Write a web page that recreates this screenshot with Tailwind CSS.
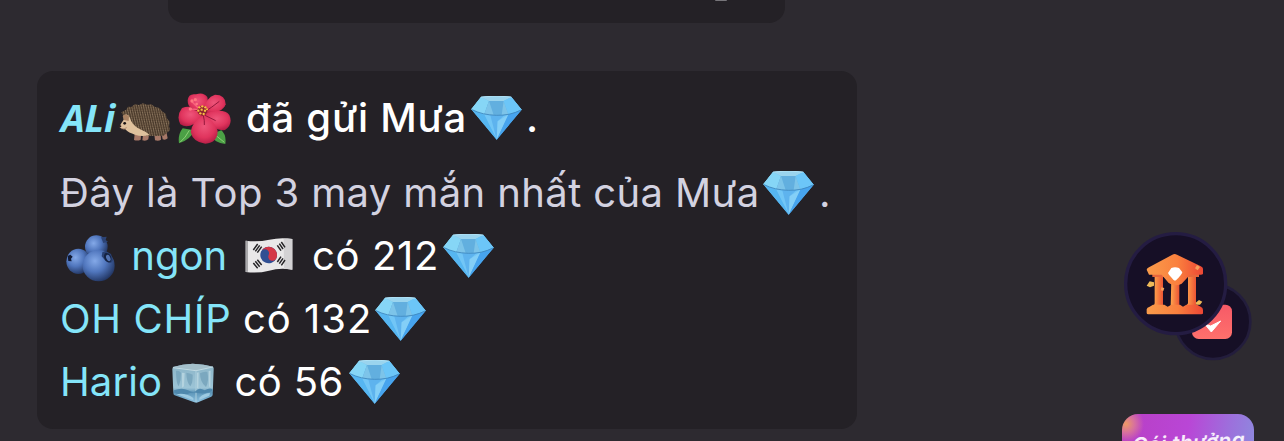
<!DOCTYPE html>
<html lang="vi">
<head>
<meta charset="utf-8">
<title>Mưa kim cương</title>
<script src="https://cdn.jsdelivr.net/npm/@tailwindcss/browser@4"></script>
</head>
<body class="bg-[#2d2a30]">
<svg class="absolute w-0 h-0" aria-hidden="true">
  <defs>
    <linearGradient id="dg" x1="0" y1="0" x2="1" y2="1"><stop offset="0" stop-color="#7fd3f8"/><stop offset=".5" stop-color="#5dbcf4"/><stop offset="1" stop-color="#2f93e6"/></linearGradient>
    <linearGradient id="dt" x1="0" y1="0" x2="1" y2="0"><stop offset="0" stop-color="#8fe0fa"/><stop offset=".4" stop-color="#62b2e2"/><stop offset="1" stop-color="#6ccaf8"/></linearGradient>
    <symbol id="diamond" viewBox="0 0 153 132">
      <path d="M30 3Q76-3 121 3L152 41L77 131L1 40Z" fill="url(#dg)"/>
      <path d="M30 3Q76-3 121 3L152 41Q120 57 76 58Q30 57 1 40Z" fill="url(#dt)"/>
      <path d="M30 3L54 15L40 55L1 40Z" fill="#86d6f6"/>
      <path d="M54 15L98 15L112 55Q76 60 40 55Z" fill="#62afdf"/>
      <path d="M54 15L68 57L40 55ZM98 15L112 55L92 57Z" fill="#7dc4e9"/>
      <path d="M30 3Q76-3 121 3L98 15L54 15Z" fill="#9ad4ee"/>
      <path d="M121 3L152 41L112 55L98 15Z" fill="#6cc6f8"/>
      <path d="M40 56Q76 61 112 56L77 131Z" fill="#72c6f6"/>
      <path d="M58 58L77 131L80 76L100 58Z" fill="#5eb3ee"/>
      <path d="M80 76L112 56L77 131Z" fill="#84cff7"/>
      <path d="M112 56L152 41L77 131Z" fill="#47a4ee"/>
      <path d="M1 40L40 56L77 131Z" fill="#56b6f1"/>
      <path d="M3 41Q35 57 76 58T150 42" fill="none" stroke="#3f86bc" stroke-width="2.5"/>
      <path d="M30 3Q76-3 121 3" fill="none" stroke="#b8e6f6" stroke-width="2.5"/>
    </symbol>
  </defs>
</svg>
<main class="flex h-[441px] w-[1284px] overflow-hidden bg-[#2d2a30]" style="font-family:Inter,'Noto Sans',sans-serif">
  <section class="w-[1110px] shrink-0">
    <div class="ml-[168px] flex h-[23px] w-[617px] justify-end rounded-b-2xl bg-[#242126] pr-[58px]"><span class="h-px w-3 rounded-b-full bg-[#77757a]"></span></div>
    <article class="mt-12 ml-[37px] flex h-[358px] w-[820px] flex-col rounded-[16px] bg-[#242126] pt-[15px] pl-[23px] text-[40px] leading-[63px] whitespace-pre text-white">
      <div class="mb-3 flex h-[63px] shrink-0 font-medium">
        <span class="w-[59px] shrink-0 pl-px text-[38px] font-bold tracking-[-0.3px] italic text-[#84e5f9]" style="font-family:'Open Sans','Noto Sans',sans-serif">ALi</span>
        <svg class="mt-[17px] h-[39px] w-[52px] shrink-0" viewBox="0 0 156 117">
          <defs><pattern id="sp" width="11" height="9" patternUnits="userSpaceOnUse" patternTransform="rotate(38)"><path d="M0 1L4 3M6 5L10 8" stroke="#b59d80" stroke-width="1.8"/><path d="M6 0L10 3M1 5L4 8" stroke="#2a1e17" stroke-width="2.2"/></pattern></defs>
          <path d="M47 93L45 111Q55 115 65 110L66 95ZM72 96L70 112Q82 115 88 109L90 95ZM106 94L108 112Q119 115 126 110L125 92ZM127 88L131 109Q140 112 146 106L142 86Z" fill="#a87968"/>
          <path d="M7 28L22 20L27 11L37 12L47 4L60 6L72 1L84 5L97 4L108 12L121 15L129 25L140 32L143 45L152 57L150 70L153 82L143 90L134 98L110 99L80 98L49 93L28 66Z" fill="#5d4a38"/>
          <path d="M7 28L22 20L27 11L37 12L47 4L60 6L72 1L84 5L97 4L108 12L121 15L129 25L140 32L143 45L152 57L150 70L153 82L143 90L134 98L110 99L80 98L49 93L28 66Z" fill="url(#sp)"/>
          <path d="M14 37Q26 30 33 45Q38 66 62 78Q80 85 92 96Q68 103 48 95Q29 90 19 79Q5 78 1 71Q8 58 14 50Z" fill="#dfc19d"/>
          <path d="M11 39Q20 29 30 40L29 54L15 51Z" fill="#aa8263"/><circle cx="17" cy="61" r="4.2" fill="#191315"/><ellipse cx="3.5" cy="70" rx="3.5" ry="3" fill="#2b1a1a"/><path d="M6 77Q17 79 23 74" fill="none" stroke="#98705a" stroke-width="2"/>
        </svg>
        <svg class="mt-[7px] ml-[7px] h-[51px] w-[53px] shrink-0" viewBox="0 0 159 153">
          <defs><radialGradient id="pt" cx=".5" cy=".4" r=".65"><stop offset="0" stop-color="#ee557a"/><stop offset=".6" stop-color="#e0345d"/><stop offset="1" stop-color="#b01b43"/></radialGradient></defs>
          <path d="M3 151Q-1 125 14 106L48 112Q39 140 3 151ZM142 153Q108 151 98 124L130 112Q146 126 142 153Z" fill="#4ba045"/><path d="M7 147Q22 135 34 112M139 148L112 126" stroke="#8fd077" stroke-width="3" fill="none"/>
          <path d="M69 55Q29 54 29 22Q31 0 54 4Q76-4 88 12Q92 31 84 58Z" fill="url(#pt)"/>
          <path d="M72 58Q84 12 111 5Q143 5 143 34Q135 59 80 66Z" fill="url(#pt)"/>
          <path d="M74 64Q136 42 154 66Q166 95 141 111Q103 116 76 76Z" fill="url(#pt)"/>
          <path d="M74 61Q42 32 12 45Q-6 69 7 94Q34 113 74 72Z" fill="url(#pt)"/>
          <path d="M74 68Q40 88 38 117Q45 148 82 152Q119 149 119 113Q108 83 80 66Z" fill="url(#pt)"/>
          <path d="M72 58Q50 52 35 43M75 60Q103 42 124 25M76 68Q80 82 79 96M81 67L113 83" stroke="#95173b" stroke-width="3" fill="none"/>
          <path d="M75 60L43 27M66 50L38 48" stroke="#f9637c" stroke-width="4"/><g fill="#ff7781"><circle cx="42" cy="24" r="5"/><circle cx="52" cy="20" r="5"/><circle cx="37" cy="48" r="5"/><circle cx="56" cy="33" r="4"/></g>
          <circle cx="73" cy="53" r="15" fill="#8f2330"/><g fill="#f7bf45"><circle cx="64" cy="43" r="3.5"/><circle cx="73" cy="40" r="3.5"/><circle cx="82" cy="43" r="3.5"/><circle cx="61" cy="53" r="3.5"/><circle cx="71" cy="50" r="3.5"/><circle cx="81" cy="53" r="3.5"/><circle cx="67" cy="61" r="3.5"/><circle cx="77" cy="63" r="3.5"/><circle cx="87" cy="49" r="3"/></g>
        </svg>
        <span class="ml-[15px] w-[225px] shrink-0 tracking-[0.75px]">đã gửi Mưa</span>
        <svg class="mt-[10px] h-11 w-[51px] shrink-0"><use href="#diamond"/></svg>
        <span class="ml-[4px]">.</span>
      </div>
      <div class="flex h-[63px] shrink-0 text-[#d3d2e0]">
        <span class="w-[703px] shrink-0 tracking-[0.38px]">Đây là Top 3 may mắn nhất của Mưa</span>
        <svg class="mt-[10px] h-11 w-[51px] shrink-0"><use href="#diamond"/></svg>
        <span class="ml-[5px]">.</span>
      </div>
      <div class="flex h-[63px] shrink-0">
        <svg class="mt-[11px] ml-[6px] h-[47px] w-[49px] shrink-0" viewBox="0 0 147 141">
          <defs><radialGradient id="bb" cx=".38" cy=".35" r=".7"><stop offset="0" stop-color="#84a9e8"/><stop offset=".5" stop-color="#5076bd"/><stop offset="1" stop-color="#20335f"/></radialGradient></defs>
          <circle cx="91" cy="35" r="34" fill="url(#bb)"/><path d="M105 7L122 5L119 15L126 20L112 24Z" fill="#2c4375"/>
          <ellipse cx="37" cy="79" rx="36" ry="38" fill="url(#bb)"/><path d="M5 63L13 59L20 65L15 71L17 79L7 78Z" fill="#111a34"/>
          <ellipse cx="98" cy="92" rx="48" ry="47" fill="url(#bb)"/><path d="M109 52L119 48L135 57L141 76L135 84L119 78L107 64Z" fill="#294173"/><ellipse cx="125" cy="68" rx="10" ry="15" transform="rotate(-24 125 68)" fill="#152342"/><ellipse cx="127" cy="69" rx="6" ry="10" transform="rotate(-24 127 69)" fill="#5373b0"/>
        </svg>
        <span class="ml-[5px] w-[125px] shrink-0 text-[#84e5f9]"> ngon</span>
        <svg class="mt-[14px] h-[35px] w-[48px] shrink-0" viewBox="0 0 144 105">
          <path d="M2 8Q38 13 73 5T142 3V95Q105 89 72 98T2 102Z" fill="#e9e8e9"/><path d="M2 8L9 9V101L2 102Z" fill="#aaa9ab"/><path d="M116 2Q131 0 142 3V95Q130 92 117 93Z" fill="#d3d2d4"/>
          <g transform="rotate(24 71 51)"><circle cx="71" cy="51" r="25" fill="#304f93"/><path d="M46 51A25 25 0 0 1 96 51A12.5 12.5 0 0 1 71 51A12.5 12.5 0 0 0 46 51Z" fill="#d43848"/></g>
          <g stroke="#242326" stroke-width="4.5"><path d="M25 36L38 18M31 40L44 22M37 44L50 26M97 22L108 38M103 17L114 33M109 12L120 28M25 75L38 91M31 70L44 86M37 65L50 81M97 72L108 56M103 77L114 61M109 82L120 66"/></g>
        </svg>
        <span class="ml-[7px] w-[143px] shrink-0 tracking-[0.65px]"> có 212</span>
        <svg class="mt-[10px] h-11 w-[51px] shrink-0"><use href="#diamond"/></svg>
      </div>
      <div class="flex h-[63px] shrink-0">
        <span class="w-[183px] shrink-0 tracking-[0.65px] text-[#84e5f9]">OH CHÍP</span>
        <span class="w-[132px] shrink-0 tracking-[1px]">có 132</span>
        <svg class="mt-[10px] h-11 w-[51px] shrink-0"><use href="#diamond"/></svg>
      </div>
      <div class="flex h-[63px] shrink-0">
        <span class="w-[112px] shrink-0 tracking-[0.1px] text-[#84e5f9]">Hario</span>
        <svg class="mt-[13px] h-10 w-[42px] shrink-0" viewBox="0 0 126 120">
          <defs><linearGradient id="ice" x1="0" y1="0" x2="0" y2="1"><stop offset="0" stop-color="#8cb5c8"/><stop offset=".62" stop-color="#9cc4d6"/><stop offset=".74" stop-color="#5d96b9"/><stop offset="1" stop-color="#8ec2e0"/></linearGradient></defs>
          <path d="M3 12Q32 3 62 2Q97 4 123 11Q126 14 125 20L122 96Q121 100 116 102L78 118Q73 120 67 118L8 97Q4 95 4 90L1 18Z" fill="url(#ice)"/>
          <path d="M3 12Q32 3 62 2Q97 4 123 11L73 22Z" fill="#a4bfca"/><path d="M3 14L72 23L123 12" fill="none" stroke="#c3dbe3" stroke-width="3"/><path d="M72 23V117" stroke="#accedc" stroke-width="3"/>
          <path d="M12 24Q20 22 27 29Q28 50 20 70Q12 60 12 24ZM43 29Q55 30 62 35Q63 58 55 70Q43 55 43 29ZM84 31Q95 25 106 27Q112 54 102 72Q84 58 84 31Z" fill="#7ba8bf"/><path d="M30 29L38 30L36 70L30 74ZM75 29L80 28L79 78L75 75ZM110 24L116 23L115 74L111 70Z" fill="#b4d3df"/>
          <path d="M6 82Q30 72 48 82T74 82T98 82Q112 74 121 78V85Q98 94 78 90T42 95Q20 95 7 89Z" fill="#4f88ad"/><path d="M13 94Q39 88 64 105L64 112ZM82 104Q96 90 114 90L112 98L82 111Z" fill="#9dcae2"/>
        </svg>
        <span class="ml-[9px] w-[126px] shrink-0 tracking-[0.35px]"> có 56</span>
        <svg class="mt-[10px] h-11 w-[51px] shrink-0"><use href="#diamond"/></svg>
      </div>
    </article>
  </section>
  <aside class="w-[160px] shrink-0 pt-[225px]">
    <svg class="block h-[145px] w-[160px]" viewBox="0 0 480 435">
      <defs>
        <linearGradient id="bank" x1="0" y1="0" x2="1" y2="0"><stop offset="0" stop-color="#f99c4b"/><stop offset=".55" stop-color="#fa803e"/><stop offset="1" stop-color="#ed4735"/></linearGradient>
        <linearGradient id="col" x1="0" y1="0" x2="1" y2="0"><stop offset="0" stop-color="#ffa54d"/><stop offset="1" stop-color="#eb5434"/></linearGradient>
        <linearGradient id="red" x1="0" y1="0" x2="0" y2="1"><stop offset="0" stop-color="#f65a67"/><stop offset="1" stop-color="#ff706c"/></linearGradient>
      </defs>
      <circle cx="309" cy="290" r="112" fill="#160f26" stroke="#231d3c" stroke-width="8"/>
      <rect x="246" y="239" width="120" height="103" rx="20" fill="url(#red)"/>
      <path d="M284 297L302 303L332 288L304 321Z" fill="#fff" stroke="#fff" stroke-width="3" stroke-linejoin="round"/>
      <circle cx="197" cy="176" r="150" fill="#160f26" stroke="#241c42" stroke-width="10"/>
      <g fill="url(#col)"><path d="M134 153H159V244H131L134 235Z"/><path d="M184 165H208V244H182Z"/><path d="M234 153H258V244H228L234 235Z"/></g>
      <path d="M127 145H163V156H127ZM229 145H267V156H229Z" fill="#e7673c"/>
      <path d="M110 134Q111 130 117 127L187 89Q194 85 201 89L271 123Q279 126 279 131V146Q278 149 272 149H240L215 176Q195 187 176 174L155 149H117Z" fill="url(#bank)"/>
      <path d="M110 253Q111 247 119 245L129 239H163L173 245L184 239H210L219 245L229 239H261L272 245Q279 248 279 255V265Q279 268 274 268H115Q110 268 110 264Z" fill="url(#bank)"/>
      <path d="M184 129Q195 124 207 129L217 142Q215 150 198 166Q194 168 190 164Q177 150 174 144Z" fill="#fff"/>
      <path d="M110 182L119 169L132 172L132 182L120 187ZM257 233L267 225L277 230L270 239L259 239Z" fill="#edb958"/><path d="M154 187L163 189L160 198L153 196ZM255 130L261 120L270 126L263 136Z" fill="#f7a05a"/>
    </svg>
    <div class="mt-11 ml-3 h-[27px] w-[132px] overflow-hidden rounded-t-[16px] bg-[radial-gradient(circle_at_4px_10px,#ed9b65_0,#d66fa0_9px,transparent_18px),linear-gradient(100deg,#b83fc4_0%,#b946d6_50%,#9d6fdc_80%,#8f87de_100%)] pt-[14px] pl-[10px]">
      <div class="w-[118px] -rotate-3 text-[21px] leading-[30px] font-semibold tracking-[0.2px] italic whitespace-nowrap text-white/90">Gói thưởng</div>
    </div>
  </aside>
</main>
</body>
</html>
